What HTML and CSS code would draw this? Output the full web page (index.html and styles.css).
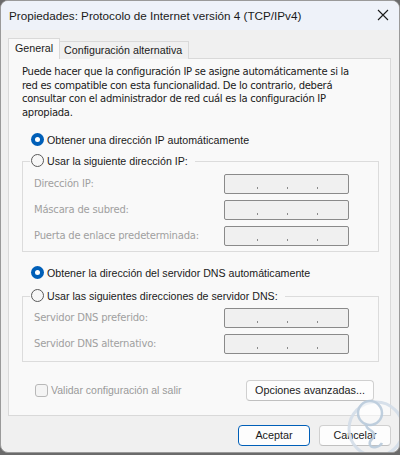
FILE: index.html
```html
<!DOCTYPE html>
<html lang="es">
<head>
<meta charset="utf-8">
<title>Propiedades: Protocolo de Internet versión 4 (TCP/IPv4)</title>
<link rel="stylesheet" href="styles.css">
</head>
<body>
<div class="window">
  <div class="titlebar">
    <span class="title">Propiedades: Protocolo de Internet versión 4 (TCP/IPv4)</span>
    <svg class="close" width="12" height="12" viewBox="0 0 12 12"><path d="M1 1L11 11M11 1L1 11" stroke="#1a1a1a" stroke-width="1.1" fill="none"/></svg>
  </div>
  <div class="content">
    <div class="tabs">
      <div class="tab active">General</div>
      <div class="tab">Configuración alternativa</div>
    </div>
    <div class="panel">
      <p class="intro">Puede hacer que la configuración IP se asigne automáticamente si la red es compatible con esta funcionalidad. De lo contrario, deberá consultar con el administrador de red cuál es la configuración IP apropiada.</p>

      <div class="radio-line first"><span class="radio on"></span><span class="rlabel">Obtener una dirección IP automáticamente</span></div>
      <div class="group ip-group">
        <div class="legend"><span class="radio"></span><span class="rlabel">Usar la siguiente dirección IP:</span></div>
        <div class="row"><span class="flabel">Dirección IP:</span><span class="ipbox"><i></i><i></i><i></i></span></div>
        <div class="row"><span class="flabel">Máscara de subred:</span><span class="ipbox"><i></i><i></i><i></i></span></div>
        <div class="row"><span class="flabel">Puerta de enlace predeterminada:</span><span class="ipbox"><i></i><i></i><i></i></span></div>
      </div>

      <div class="radio-line second"><span class="radio on"></span><span class="rlabel">Obtener la dirección del servidor DNS automáticamente</span></div>
      <div class="group dns-group">
        <div class="legend"><span class="radio"></span><span class="rlabel">Usar las siguientes direcciones de servidor DNS:</span></div>
        <div class="row"><span class="flabel">Servidor DNS preferido:</span><span class="ipbox"><i></i><i></i><i></i></span></div>
        <div class="row"><span class="flabel">Servidor DNS alternativo:</span><span class="ipbox"><i></i><i></i><i></i></span></div>
      </div>

      <div class="bottom-row">
        <div class="check"><span class="box"></span><span class="clabel">Validar configuración al salir</span></div>
        <div class="btn">Opciones avanzadas...</div>
      </div>
    </div>
    <div class="footer">
      <div class="btn default">Aceptar</div>
      <div class="btn">Cancelar</div>
    </div>
  </div>
  <svg class="watermark" width="60" height="70" viewBox="0 0 60 70">
    <circle cx="32" cy="40" r="27" fill="none" stroke="#d3dde8" stroke-width="3"/>
    <circle cx="26" cy="24" r="12" fill="#ffffff" fill-opacity="0.6" stroke="#b9cadb" stroke-width="2.5"/>
    <path d="M22 35 C22 42 30 40 30 46 C30 52 24 50 26 56 C28 60 36 58 38 54" fill="none" stroke="#b9cadb" stroke-width="2.5"/>
  </svg>
</div>
</body>
</html>
```

FILE: styles.css
```css
* { box-sizing: border-box; }
html, body { margin: 0; padding: 0; }
body {
  width: 400px;
  height: 455px;
  overflow: hidden;
  background: #6b6b6b;
}
.window {
  position: relative;
  width: 400px;
  height: 453px;
  background: #f0f0f0;
  border: 1px solid #9a9a9a;
  border-radius: 8px;
  overflow: hidden;
  font-family: "Liberation Sans", Arial, sans-serif;
  font-size: 10.7px;
  color: #1a1a1a;
}
.titlebar {
  height: 29px;
  background: #eef2f9;
  display: flex;
  align-items: center;
  justify-content: space-between;
  padding: 0 10px 0 8px;
}
.title { font-size: 11.7px; color: #1a1a1a; white-space: nowrap; }
.close { display: block; margin-top: -1px; }
.content { padding: 0 8px 0 7px; }
.tabs {
  display: flex;
  align-items: flex-end;
  height: 28px;
}
.tab {
  height: 18px;
  padding: 0 6px 0 4px;
  border: 1px solid #d9d9d9;
  border-bottom: none;
  background: #f0f0f0;
  line-height: 17px;
  font-size: 10.7px;
  margin-bottom: -1px;
  position: relative;
  white-space: nowrap;
}
.tab.active {
  height: 21px;
  background: #f9f9f9;
  padding: 0 6px 0 6px;
  line-height: 19px;
  z-index: 1;
  margin-right: -1px;
}
.panel {
  height: 358px;
  background: #f9f9f9;
  border: 1px solid #d9d9d9;
  padding: 6px 12px 0 13px;
  font-family: "DejaVu Sans", Tahoma, sans-serif;
  font-size: 10px;
}
.intro {
  margin: 0;
  max-width: 335px;
  line-height: 13.7px;
  color: #1a1a1a;
  letter-spacing: -0.28px;
}
.radio-line {
  display: flex;
  align-items: center;
  height: 16px;
  padding-left: 9px;
}
.radio-line.first { margin-top: 12px; }
.radio-line.second { margin-top: 13px; }
.radio {
  width: 13px;
  height: 13px;
  border-radius: 50%;
  border: 1px solid #5a5a5a;
  background: #f7f7f7;
  flex: none;
  margin-right: 3px;
  position: relative;
}
.radio.on {
  border: none;
  background: #005fb8;
}
.radio.on::after {
  content: "";
  position: absolute;
  left: 4px;
  top: 4px;
  width: 5px;
  height: 5px;
  border-radius: 50%;
  background: #ffffff;
}
.rlabel {
  font-family: "Liberation Sans", Arial, sans-serif;
  font-size: 10.65px;
  color: #1a1a1a;
  white-space: nowrap;
}
.group {
  position: relative;
  border: 1px solid #dcdcdc;
  width: 357px;
  margin-top: 13px;
  padding: 9px 0 0 11px;
}
.legend {
  position: absolute;
  left: 7px;
  top: -9px;
  display: flex;
  align-items: center;
  height: 16px;
  background: #f9f9f9;
  padding: 0 7px 0 1px;
}
.row {
  display: flex;
  align-items: center;
  justify-content: space-between;
  height: 26px;
  padding-right: 29px;
}
.flabel { color: #a0a0a0; letter-spacing: -0.2px; }
.ipbox {
  width: 125px;
  height: 20px;
  border: 1px solid #8a8a8a;
  border-radius: 2px;
  background: #f0f0f0;
  position: relative;
}
.ipbox i {
  position: absolute;
  top: 12px;
  width: 1px;
  height: 2px;
  background: #8a8a8a;
}
.ipbox i:nth-child(1) { left: 32px; }
.ipbox i:nth-child(2) { left: 62px; }
.ipbox i:nth-child(3) { left: 92px; }
.ip-group { height: 91px; }
.dns-group { height: 66px; margin-top: 15px; padding-top: 8px; }
.bottom-row {
  display: flex;
  align-items: center;
  justify-content: space-between;
  margin-top: 18px;
  padding-left: 13px;
  width: 352px;
}
.check { display: flex; align-items: center; }
.box {
  width: 13px;
  height: 13px;
  border: 1px solid #b8b8b8;
  border-radius: 3px;
  background: #f4f4f4;
  margin-right: 3px;
}
.clabel {
  font-family: "Liberation Sans", Arial, sans-serif;
  font-size: 10.5px;
  color: #9a9a9a;
}
.btn {
  font-family: "Liberation Sans", Arial, sans-serif;
  font-size: 10.8px;
  color: #1a1a1a;
  background: #fdfdfd;
  border: 1px solid #d0d0d0;
  border-bottom-color: #c0c0c0;
  border-radius: 4px;
  height: 21px;
  line-height: 19px;
  text-align: center;
  padding: 0 4px;
  white-space: nowrap;
}
.panel .btn { width: 128px; }
.footer {
  display: flex;
  justify-content: flex-end;
  gap: 9px;
  margin-top: 9px;
}
.footer .btn { width: 72px; }
.btn.default {
  border: 1px solid #005fb8;
}
.watermark {
  position: absolute;
  left: 343px;
  top: 388px;
  opacity: 0.9;
}
```
